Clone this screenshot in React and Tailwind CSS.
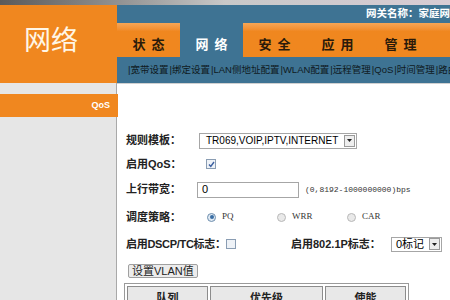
import React from "react";

const tabs = ["状态", "网络", "安全", "应用", "管理", "诊"];
const subMenu = ["宽带设置", "绑定设置", "LAN侧地址配置", "WLAN配置", "远程管理", "QoS", "时间管理", "路由"];

function Arrow() {
    return (
        <div className="w-[11px] h-[12px] shrink-0 bg-[#eeeeee] border border-[#9a9a9a] flex items-center justify-center">
            <svg width="5" height="3" viewBox="0 0 5 3"><path d="M0 0h5L2.5 3z" fill="#222" /></svg>
        </div>
    );
}

function Radio({ checked }) {
    return (
        <div className={`w-[9px] h-[9px] rounded-full border flex items-center justify-center ${checked ? "border-[#6f8fae] bg-[#dfe9f3]" : "border-[#b8b8b8] bg-[#e9e9e9]"}`}>
            {checked && <div className="w-[4px] h-[4px] rounded-full bg-[#3a6ea5]" />}
        </div>
    );
}

function Check({ checked }) {
    return (
        <div className="w-[10px] h-[10px] shrink-0 border border-[#8a9db3] bg-[#eef2f7] flex items-center justify-center">
            {checked && (
                <svg width="7" height="7" viewBox="0 0 7 7"><path d="M1 3.5l1.8 2L6 1" stroke="#3b5fa0" strokeWidth="1.4" fill="none" /></svg>
            )}
        </div>
    );
}

export default function App() {
    return (
        <div className="w-[450px] h-[300px] overflow-hidden bg-white flex flex-col" style={{ fontFamily: '"Liberation Sans", "Noto Sans CJK SC", sans-serif' }}>
            <div className="h-[5px] bg-gradient-to-r from-[#5a5a5a] via-[#c8c8c8] to-[#d8ccd4]" />

            <div className="flex h-[78px]">
                <div className="w-[117px] bg-[#f0871f] pl-[24px] pt-[20px]">
                    <span className="text-[27px] leading-none text-[#fff6e6]" style={{ fontFamily: '"Noto Sans CJK SC", sans-serif' }}>网络</span>
                </div>
                <div className="flex-1 flex flex-col min-w-0">
                    <div className="h-[18px] bg-[#3e7393] flex items-center pl-[249px] whitespace-nowrap text-[10.5px] font-bold text-white overflow-hidden">
                        网关名称：家庭网
                    </div>
                    <div className="h-[34px] flex bg-gradient-to-b from-[#f6a655] to-[#f0871f] to-[25%] whitespace-nowrap overflow-hidden">
                        {tabs.map((t, i) => (
                            <div
                                key={t}
                                className={`w-[63px] shrink-0 flex justify-center items-center pt-[10px] pl-[6px] text-[13px] font-bold tracking-[6px] ${i === 1 ? "bg-[#3e7393] text-white" : "text-[#2a1a0a]"}`}
                            >
                                {t}
                            </div>
                        ))}
                    </div>
                    <div className="h-[26px] bg-[#3e7393] flex items-center pl-[11px] whitespace-nowrap text-[9.5px] text-[#0f1a22] overflow-hidden">
                        {subMenu.map((s) => (
                            <span key={s} className="mr-[1px]">|{s}</span>
                        ))}
                    </div>
                </div>
            </div>

            <div className="flex flex-1 min-h-0">
                <div className="w-[117px] bg-[#e6e6e6] border-r border-[#a9a9a9] pt-[11px]">
                    <div className="h-[23px] bg-[#f0871f] flex items-center justify-end pr-[8px] text-[9px] font-bold text-white mr-[-2px]">
                        QoS
                    </div>
                </div>
                <div className="flex-1 flex flex-col">
                    <div className="h-[5px] bg-[#e4e4e4] border-b border-[#d0d0d0]" />
                    <div className="flex flex-col pl-[9px] pt-[45px] text-[11px] text-[#222] whitespace-nowrap">
                        <div className="h-[23px] flex items-center">
                            <span className="w-[73px] shrink-0 font-bold">规则模板：</span>
                            <div className="w-[158px] h-[16px] border border-[#a6a6a6] flex items-center justify-between pl-[6px] pr-[1px] overflow-hidden">
                                <span className="text-[10px] text-black">TR069,VOIP,IPTV,INTERNET</span>
                                <Arrow />
                            </div>
                        </div>
                        <div className="h-[24px] flex items-center">
                            <span className="w-[80px] shrink-0 font-bold">启用QoS：</span>
                            <Check checked />
                        </div>
                        <div className="h-[27px] flex items-center">
                            <span className="w-[71px] shrink-0 font-bold">上行带宽：</span>
                            <div className="w-[102px] h-[16px] border border-[#a6a6a6] flex items-center pl-[4px] text-[11px] text-black">0</div>
                            <span className="ml-[6px] text-[8px] text-[#333]" style={{ fontFamily: '"Liberation Mono", monospace' }}>(0,8192-1000000000)bps</span>
                        </div>
                        <div className="h-[28px] flex items-center">
                            <span className="w-[81px] shrink-0 font-bold">调度策略：</span>
                            {[["PQ", true], ["WRR", false], ["CAR", false]].map(([l, c]) => (
                                <div key={l} className="w-[70px] flex items-center gap-[6px]">
                                    <Radio checked={c} />
                                    <span className="text-[9px] text-[#333]" style={{ fontFamily: '"Liberation Serif", serif' }}>{l}</span>
                                </div>
                            ))}
                        </div>
                        <div className="h-[26px] flex items-center">
                            <span className="w-[100px] shrink-0 font-bold tracking-[-0.3px]">启用DSCP/TC标志：</span>
                            <Check />
                            <span className="ml-[55px] w-[100px] shrink-0 font-bold">启用802.1P标志：</span>
                            <div className="w-[51px] h-[15px] border border-[#a6a6a6] flex items-center justify-between pl-[4px] pr-[1px]">
                                <span className="text-[11px] text-black">0标记</span>
                                <Arrow />
                            </div>
                        </div>
                        <div className="mt-[7px]">
                            <button className="h-[14px] px-[3px] ml-[2px] bg-[#ececec] border border-[#a0a0a0] rounded-[2px] text-[11px] leading-none text-[#222] flex items-center">
                                设置VLAN值
                            </button>
                        </div>
                        <table className="mt-[5px] ml-[-2px] w-[285px] border border-[#9a9a9a] border-separate border-spacing-[2px]">
                            <thead>
                                <tr className="text-[11px] font-bold text-[#222]">
                                    <th className="w-[81px] h-[24px] bg-[#e8e8e8] border border-[#8c8c8c]">队列</th>
                                    <th className="w-[113px] bg-[#e8e8e8] border border-[#8c8c8c]">优先级</th>
                                    <th className="w-[81px] bg-[#e8e8e8] border border-[#8c8c8c]">使能</th>
                                </tr>
                            </thead>
                        </table>
                    </div>
                </div>
            </div>
        </div>
    );
}
